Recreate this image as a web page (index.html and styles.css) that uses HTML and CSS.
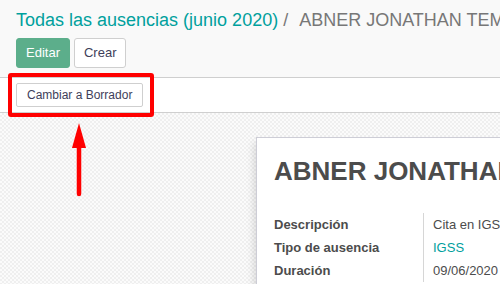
FILE: index.html
```html
<!DOCTYPE html>
<html lang="es">
<head>
<meta charset="utf-8">
<title>Ausencia</title>
<link rel="stylesheet" href="styles.css">
</head>
<body>
<div class="app">
  <div class="control-panel">
    <div class="breadcrumb">
      <a class="crumb-link">Todas las ausencias (junio 2020)</a><span class="crumb-sep">/</span><span class="crumb-active">ABNER JONATHAN TEMAJ LÓPEZ</span>
    </div>
    <div class="cp-buttons">
      <button class="btn btn-primary">Editar</button>
      <button class="btn btn-secondary">Crear</button>
    </div>
  </div>
  <div class="statusbar">
    <button class="btn-status">Cambiar a Borrador</button>
  </div>
  <div class="form-view">
    <div class="sheet">
      <h1 class="title">ABNER JONATHAN TEMAJ LÓPEZ</h1>
      <div class="fields">
        <div class="label">Descripción</div><div class="value">Cita en IGSS</div>
        <div class="label">Tipo de ausencia</div><div class="value"><a class="link">IGSS</a></div>
        <div class="label">Duración</div><div class="value">09/06/2020</div>
      </div>
    </div>
  </div>
  <div class="highlight-box"></div>
  <svg class="arrow" width="20" height="80" viewBox="0 0 20 80" aria-hidden="true">
    <polygon points="9,0 2,25 16,25" fill="#ff0000"/>
    <line x1="9" y1="22" x2="9" y2="71" stroke="#ff0000" stroke-width="4.5" stroke-linecap="round"/>
  </svg>
</div>
</body>
</html>
```
FILE: styles.css
```css
* { box-sizing: border-box; }
html, body { margin: 0; padding: 0; }
body {
  width: 500px;
  height: 284px;
  overflow: hidden;
  font-family: "Liberation Sans", Arial, sans-serif;
  font-size: 13px;
  color: #4c4c4c;
  background: #f9f9f9;
}
.app {
  position: relative;
  width: 500px;
  height: 284px;
  overflow: hidden;
  display: flex;
  flex-direction: column;
}
.control-panel {
  background: #f9f9f9;
  padding: 9px 16px 9px 16px;
  border-bottom: 1px solid #cfcfcf;
  flex: none;
}
.breadcrumb {
  font-size: 18px;
  line-height: 22px;
  white-space: nowrap;
}
.crumb-link { color: #00a09d; }
.crumb-sep { color: #777; padding: 0 11px 0 5px; }
.crumb-active { color: #777; }
.cp-buttons {
  margin-top: 7px;
  display: flex;
  gap: 4px;
}
.btn {
  font-family: "Liberation Sans", Arial, sans-serif;
  font-size: 13px;
  line-height: 18px;
  height: 30px;
  padding: 5px 9px;
  border-radius: 3px;
  border: 1px solid #cfcfcf;
  cursor: pointer;
}
.btn-primary {
  background: #5cae8b;
  border-color: #5cae8b;
  color: #fff;
}
.btn-secondary {
  background: #fff;
  color: #3e3e5a;
  padding: 5px 9px;
}
.statusbar {
  background: #fff;
  padding: 5px 16px;
  border-bottom: 1px solid #cfcfcf;
  flex: none;
  display: flex;
}
.btn-status {
  font-family: "Liberation Sans", Arial, sans-serif;
  font-size: 12px;
  line-height: 16px;
  height: 24px;
  padding: 3px 10px;
  background: #fff;
  color: #3e3e5a;
  border: 1px solid #cfcfcf;
  border-radius: 2px;
}
.form-view {
  flex: 1;
  padding: 24px 0 0 256px;
  background-color: #fbfbfb;
  background-image: conic-gradient(#efefef 25%, transparent 0 50%, #efefef 0 75%, transparent 0);
  background-size: 4px 4px;
  overflow: hidden;
}
.sheet {
  width: 640px;
  min-height: 300px;
  background: #fff;
  border: 1px solid #cdcdd6;
  box-shadow: -4px 4px 8px -2px rgba(0,0,0,0.13);
  padding: 18px 17px 0 17px;
}
.title {
  margin: 0;
  font-size: 26px;
  line-height: 31px;
  font-weight: bold;
  color: #4c4c4c;
  white-space: nowrap;
}
.fields {
  margin-top: 26px;
  display: grid;
  grid-template-columns: 149px 1fr;
  line-height: 23px;
}
.label {
  font-weight: bold;
  color: #4c4c4c;
  white-space: nowrap;
}
.value {
  border-left: 1px solid #d6d6d6;
  padding-left: 9px;
  color: #4c4c4c;
  white-space: nowrap;
}
.link { color: #00a09d; }
.highlight-box {
  position: absolute;
  left: 8px;
  top: 73px;
  width: 146px;
  height: 44px;
  border: 4px solid #ff0000;
  border-radius: 3px;
}
.arrow {
  position: absolute;
  left: 70px;
  top: 123px;
}
```
